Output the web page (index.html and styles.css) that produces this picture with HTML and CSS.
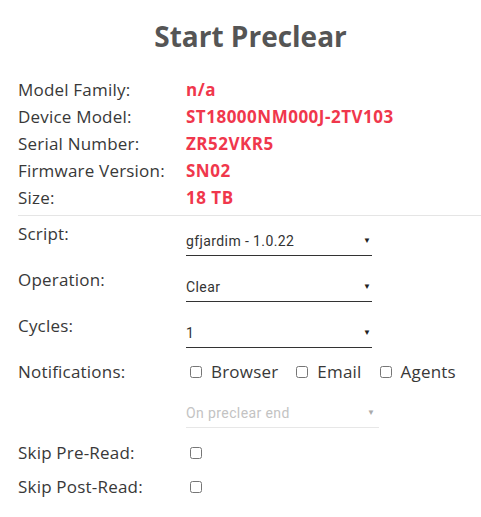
FILE: index.html
```html
<!DOCTYPE html>
<html lang="en">
<head>
  <meta charset="UTF-8" />
  <meta name="viewport" content="width=device-width, initial-scale=1.0" />
  <title>Start Preclear</title>
  <link rel="stylesheet" href="styles.css">
</head>
<body>
  <h2 class="title">Start Preclear</h2>

  <div class="disk-info">
    <div class="info-row"><span class="label">Model Family:</span><span class="value">n/a</span></div>
    <div class="info-row"><span class="label">Device Model:</span><span class="value">ST18000NM000J-2TV103</span></div>
    <div class="info-row"><span class="label">Serial Number:</span><span class="value">ZR52VKR5</span></div>
    <div class="info-row"><span class="label">Firmware Version:</span><span class="value">SN02</span></div>
    <div class="info-row"><span class="label">Size:</span><span class="value">18 TB</span></div>
  </div>

  <hr class="divider">

  <form class="preclear-form">
    <div class="form-row">
      <label class="label" for="script">Script:</label>
      <span class="select-wrap">
        <select id="script">
          <option>gfjardim - 1.0.22</option>
        </select>
      </span>
    </div>

    <div class="form-row">
      <label class="label" for="operation">Operation:</label>
      <span class="select-wrap">
        <select id="operation">
          <option>Clear</option>
          <option>Verify All</option>
          <option>Verify MBR Only</option>
          <option>Erase</option>
          <option>Erase and Clear</option>
        </select>
      </span>
    </div>

    <div class="form-row">
      <label class="label" for="cycles">Cycles:</label>
      <span class="select-wrap">
        <select id="cycles">
          <option>1</option>
          <option>2</option>
          <option>3</option>
        </select>
      </span>
    </div>

    <div class="form-row notify-row">
      <span class="label">Notifications:</span>
      <div class="checks">
        <label><input type="checkbox"> Browser</label>
        <label><input type="checkbox"> Email</label>
        <label><input type="checkbox"> Agents</label>
      </div>
    </div>

    <div class="form-row frequency-row">
      <span class="label"></span>
      <span class="select-wrap disabled">
        <select disabled>
          <option>On preclear end</option>
        </select>
      </span>
    </div>

    <div class="form-row check-row">
      <label class="label" for="skipPreRead">Skip Pre-Read:</label>
      <input type="checkbox" id="skipPreRead">
    </div>

    <div class="form-row check-row">
      <label class="label" for="skipPostRead">Skip Post-Read:</label>
      <input type="checkbox" id="skipPostRead">
    </div>
  </form>
</body>
</html>
```

FILE: styles.css
```css
body {
  margin: 0;
  padding: 0 0 0 18px;
  background: #fff;
  font-family: "Open Sans", Arial, sans-serif;
  font-size: 17px;
  letter-spacing: 0.2px;
  color: #383838;
}

.title {
  margin: 18px 0 0 2px;
  font-size: 28px;
  line-height: 36px;
  font-weight: 700;
  letter-spacing: 0;
  color: #555;
  text-align: center;
}

.disk-info {
  margin-top: 22px;
}

.info-row {
  display: grid;
  grid-template-columns: 168px 1fr;
  line-height: 27px;
}

.value {
  color: #f0374c;
  font-weight: 700;
  letter-spacing: 0.5px;
}

.divider {
  margin: 4px 0 0;
  border: none;
  border-top: 1px solid #e5e5e5;
}

.preclear-form {
  padding-top: 8px;
}

.form-row {
  display: grid;
  grid-template-columns: 168px 1fr;
  align-items: start;
  height: 46px;
}

.form-row .label {
  line-height: 20px;
}

.select-wrap {
  position: relative;
  display: block;
  width: 186px;
}

.select-wrap select {
  appearance: none;
  -webkit-appearance: none;
  width: 100%;
  margin: 0;
  padding: 8px 0 5px;
  border: none;
  border-bottom: 1px solid #333;
  border-radius: 0;
  background: none;
  font-family: Roboto, Arial, sans-serif;
  font-size: 14px;
  letter-spacing: 0.4px;
  line-height: 18px;
  color: #333;
  outline: none;
}

.select-wrap::after {
  content: "\25BC";
  position: absolute;
  right: 1px;
  top: 10px;
  font-size: 8px;
  color: #222;
  pointer-events: none;
}

.select-wrap.disabled {
  width: 193px;
}

.select-wrap.disabled select {
  color: #aaa;
  border-bottom-color: #ddd;
}

.select-wrap.disabled::after {
  color: #aaa;
  right: 4px;
}

.notify-row {
  height: 34px;
}

.checks {
  display: flex;
  gap: 14px;
  line-height: 20px;
}

.checks label {
  display: flex;
  align-items: center;
}

input[type="checkbox"] {
  width: 12px;
  height: 12px;
  margin: 4px 9px 0 4px;
}

.checks input[type="checkbox"] {
  margin-top: 0;
}

.frequency-row {
  height: 47px;
}

.check-row {
  height: 34px;
}
```
